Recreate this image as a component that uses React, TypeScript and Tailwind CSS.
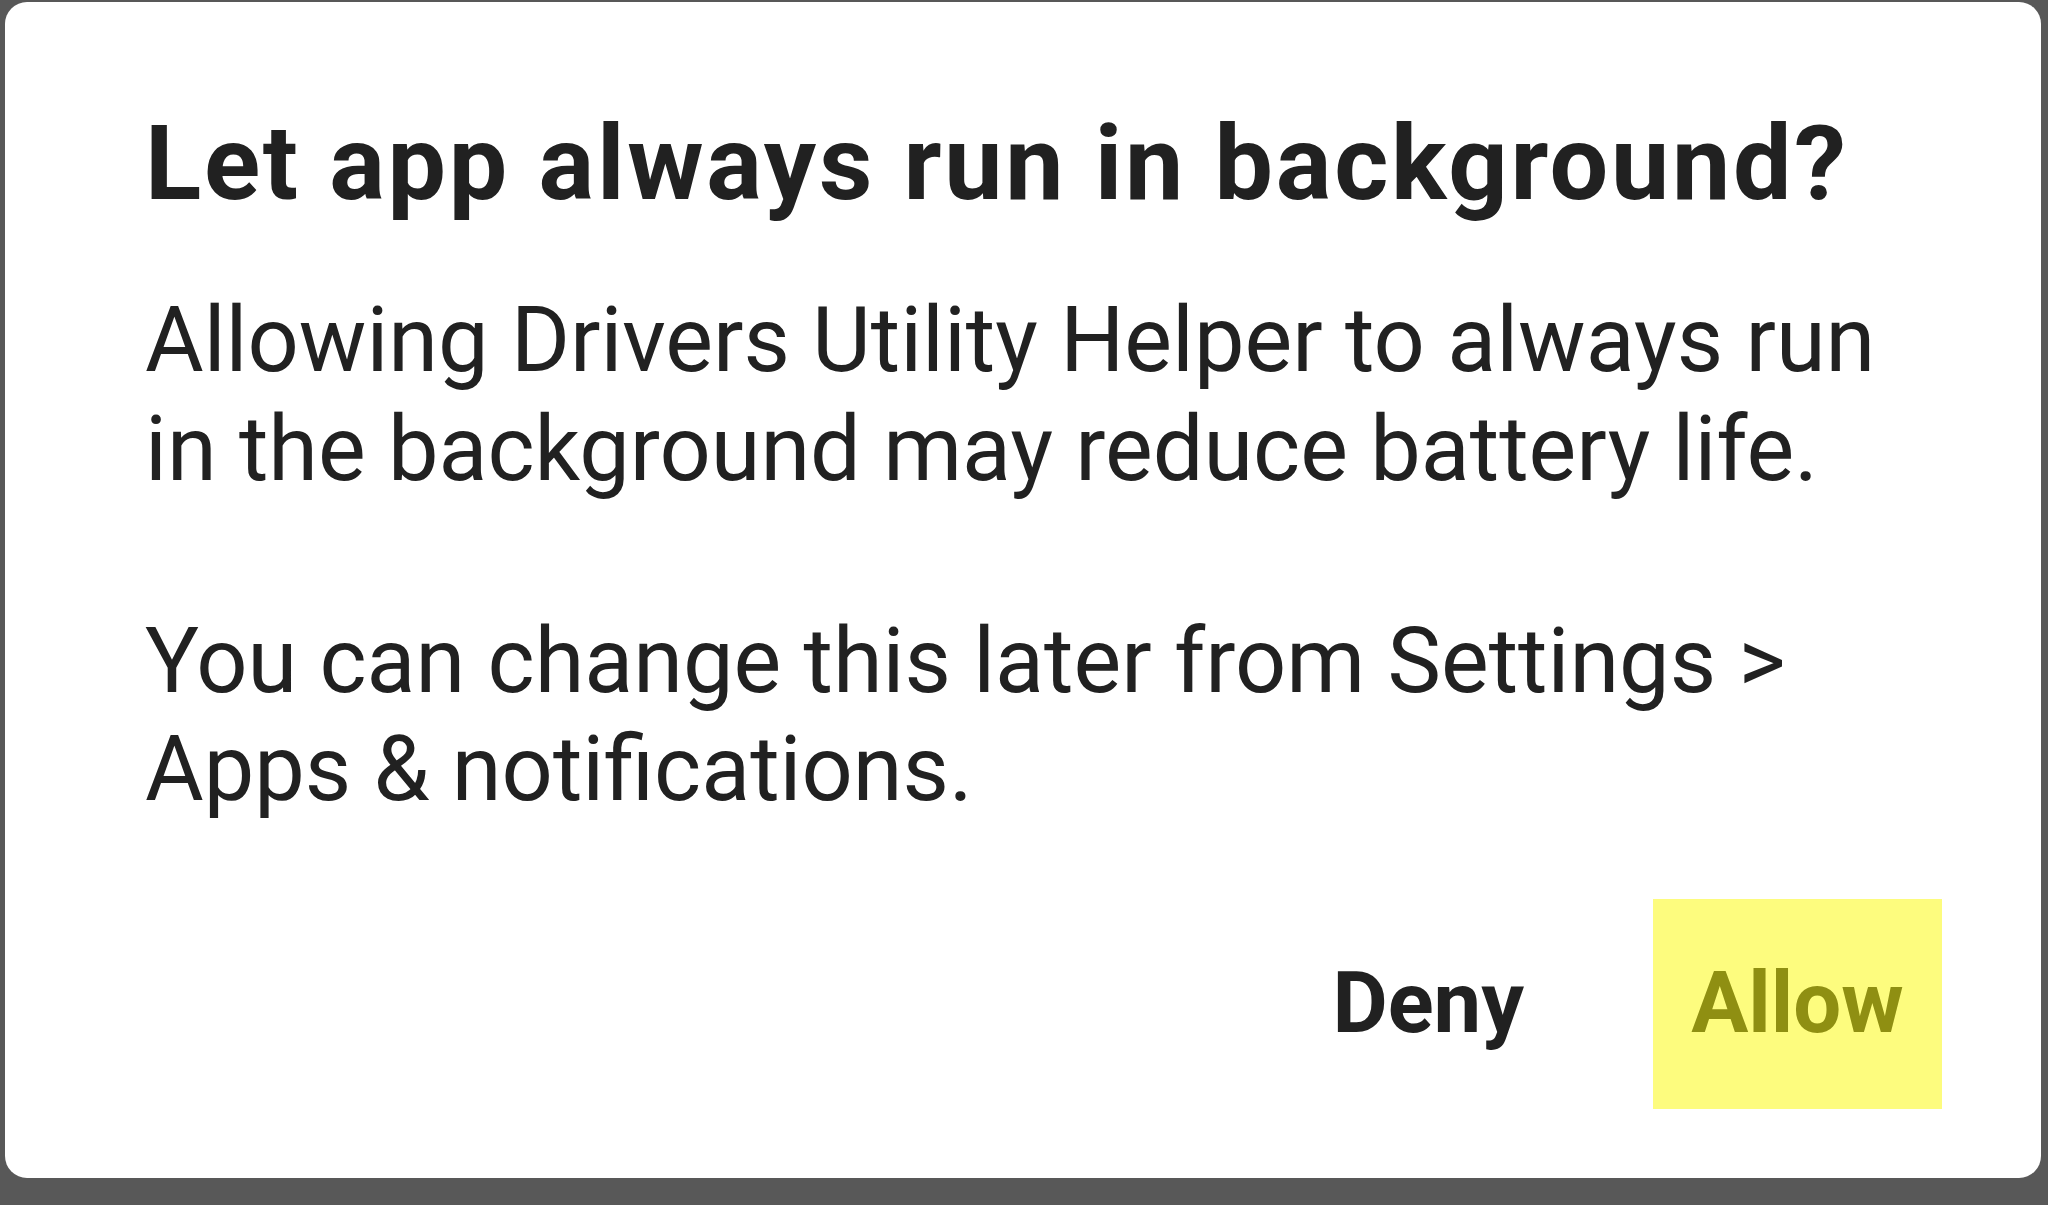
import * as React from "react";

const App: React.FC = () => {
  return (
    <div className="w-[2048px] h-[1205px] bg-[#585858] pt-[2px] pl-[5px] pr-[7px] pb-[27px] font-['Roboto',sans-serif]">
      <div className="h-full w-full bg-white rounded-[22px] pl-[140px] pr-[99px] pt-[102px] text-[#212121]">
        <h1 className="text-[104px] leading-[120px] font-bold tracking-[2.7px] whitespace-nowrap">
          Let app always run in background?
        </h1>
        <p className="mt-[62px] text-[90px] leading-[109px] whitespace-nowrap">
          Allowing Drivers Utility Helper to always run
          <br />
          in the background may reduce battery life.
        </p>
        <p className="mt-[104px] text-[90px] leading-[108px] whitespace-nowrap">
          You can change this later from Settings &gt;
          <br />
          Apps &amp; notifications.
        </p>
        <div className="mt-[75px] flex justify-end">
          <button className="h-[210px] px-[38px] text-[85px] font-bold text-[#212121]">Deny</button>
          <button className="ml-[91px] h-[210px] w-[289px] text-center text-[85px] font-bold text-[#8f8f12] bg-[#fdfc7e]">
            Allow
          </button>
        </div>
      </div>
    </div>
  );
};

export default App;
